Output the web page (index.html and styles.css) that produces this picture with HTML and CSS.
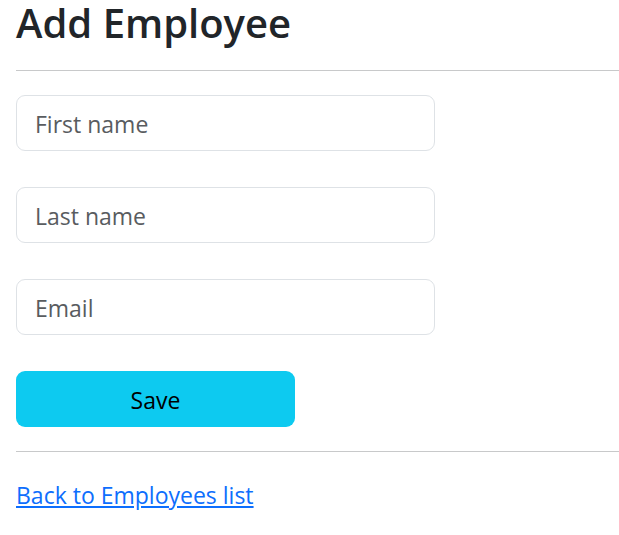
FILE: index.html
```html
<!DOCTYPE html>
<html lang="en">
<head>
<meta charset="utf-8">
<title>Add Employee</title>
<link rel="stylesheet" href="styles.css">
</head>
<body>
<main class="page">
<h1 class="title">Add Employee</h1>
<hr class="rule">
<form class="form">
<input class="field" type="text" name="firstName" placeholder="First name" aria-label="First name">
<input class="field" type="text" name="lastName" placeholder="Last name" aria-label="Last name">
<input class="field" type="email" name="email" placeholder="Email" aria-label="Email">
<button class="save" type="submit">Save</button>
</form>
<hr class="rule">
<a class="back" href="#">Back to Employees list</a>
</main>
</body>
</html>
```
FILE: styles.css
```css
* { box-sizing: border-box; }
body {
  margin: 0;
  background: #fff;
  color: #212529;
  font: 23px/38px "Segoe UI", "Open Sans", "Noto Sans", sans-serif;
}
.page { padding-left: 16px; }
.title {
  margin: 0;
  font-size: 40px;
  line-height: 46px;
  font-weight: 600;
}
.rule {
  height: 1px;
  margin: 24px 0;
  border: 0;
  background: #c8c9ca;
}
.form {
  display: flex;
  flex-direction: column;
  align-items: flex-start;
  gap: 36px;
}
.field {
  width: 419px;
  max-width: 100%;
  height: 56px;
  padding: 10px 18px 8px;
  border: 1px solid #dee2e6;
  border-radius: 9px;
  background: #fff;
  color: #212529;
  font: inherit;
}
.field::placeholder { color: #595c5f; opacity: 1; }
.save {
  width: 279px;
  max-width: 100%;
  height: 56px;
  padding: 10px 18px 8px;
  border: 0;
  border-radius: 9px;
  background: #0dcaf0;
  color: #000;
  font: inherit;
}
.back { color: #0d6efd; }
```
